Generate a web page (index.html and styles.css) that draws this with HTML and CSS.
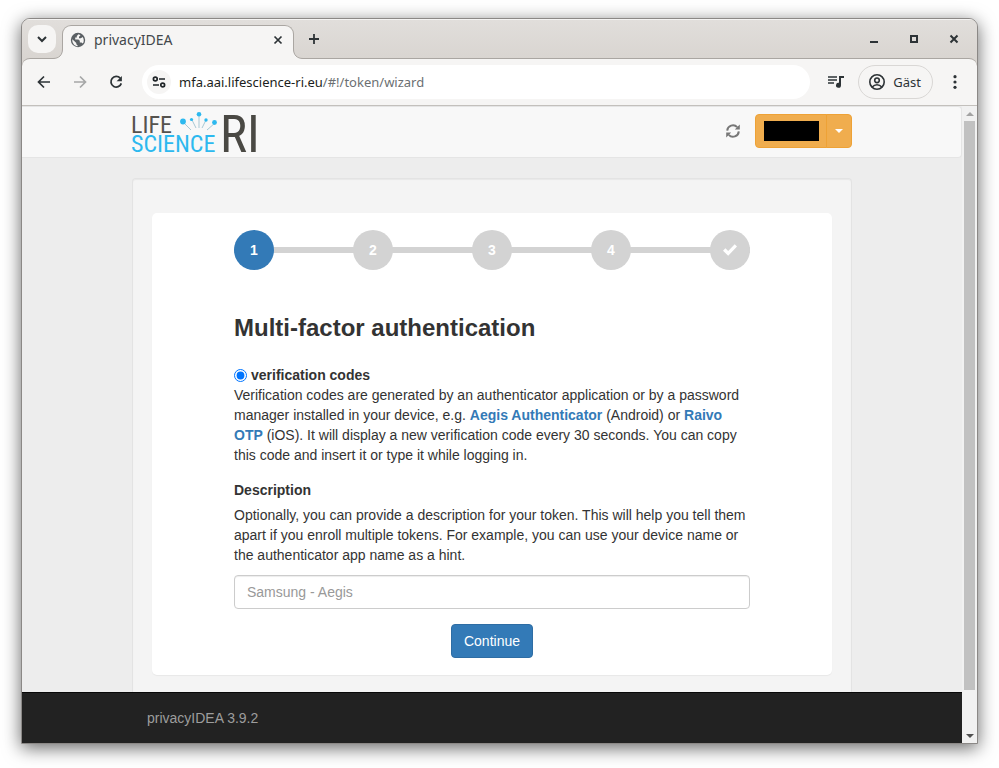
FILE: index.html
```html
<!DOCTYPE html>
<html lang="en">
<head>
<meta charset="utf-8">
<title>privacyIDEA</title>
<link rel="stylesheet" href="styles.css">
</head>
<body>
<div class="window">
  <div class="titlebar">
    <button class="tab-search" aria-label="Search tabs"><svg width="12" height="12" viewBox="0 0 12 12"><path d="M2 4l4 4 4-4" fill="none" stroke="#2d3336" stroke-width="2"/></svg></button>
    <div class="tab">
      <svg class="foot foot-left" width="10" height="10" viewBox="0 0 10 10"><path d="M10 0v10H0V9.500C6 9.500 9.500 6 9.500 0z" fill="#f6f5f4"/><path d="M0 9.500C6 9.500 9.500 6 9.500 0" fill="none" stroke="#aaa6a2"/></svg>
      <svg class="globe" width="16" height="16" viewBox="0 0 16 16"><circle cx="8" cy="8" r="7.200" fill="#5b6064"/><path d="M8.600 2.300L6.800 4v1.600H5.200v2H8.400l1.400 1.200v1.700h1.700l1.400 1C14.200 9.600 14 6.500 12.600 5L11 6.300H9V4.800l1.500-1.600zM2.300 7.300l4 3.700v1.200l1.300 1v1C4.300 14 2 11.200 2.300 7.300z" fill="#f6f5f4"/></svg>
      <span class="tab-title">privacyIDEA</span>
      <button class="plain" aria-label="Close tab"><svg width="10" height="10" viewBox="0 0 10 10"><path d="M1.500 1.500l7 7M8.500 1.500l-7 7" stroke="#2d3336" stroke-width="1.700"/></svg></button>
      <svg class="foot foot-right" width="10" height="10" viewBox="0 0 10 10"><path d="M0 0v10h10V9.500C4 9.500.5 6 .5 0z" fill="#f6f5f4"/><path d="M10 9.500C4 9.500.5 6 .5 0" fill="none" stroke="#aaa6a2"/></svg>
    </div>
    <button class="plain new-tab" aria-label="New tab"><svg width="12" height="12" viewBox="0 0 12 12"><path d="M6 1v10M1 6h10" stroke="#2d3336" stroke-width="1.800"/></svg></button>
    <div class="window-controls">
      <button class="plain" aria-label="Minimize"><svg width="10" height="10" viewBox="0 0 10 10"><path d="M1 8h8" stroke="#2d3336" stroke-width="2"/></svg></button>
      <button class="plain" aria-label="Maximize"><svg width="10" height="10" viewBox="0 0 10 10"><path d="M2 2h6v6H2z" fill="none" stroke="#2d3336" stroke-width="2"/></svg></button>
      <button class="plain" aria-label="Close"><svg width="10" height="10" viewBox="0 0 10 10"><path d="M1.500 1.500l7 7M8.500 1.500l-7 7" stroke="#2d3336" stroke-width="2"/></svg></button>
    </div>
  </div>
  <div class="toolbar">
    <button class="plain nav-button" aria-label="Back"><svg width="14" height="14" viewBox="0 0 14 14"><path d="M13 7H2M7 1.500L1.500 7 7 12.500" fill="none" stroke="#2d3336" stroke-width="1.700"/></svg></button>
    <button class="plain nav-button" aria-label="Forward"><svg width="14" height="14" viewBox="0 0 14 14"><path d="M1 7h11M7 1.500L12.500 7 7 12.500" fill="none" stroke="#a6a7a7" stroke-width="1.700"/></svg></button>
    <button class="plain nav-button" aria-label="Reload"><svg width="14" height="14" viewBox="0 0 14 14"><path d="M11.200 3.200A5.300 5.300 0 1 0 12.300 8.400" fill="none" stroke="#2d3336" stroke-width="1.800"/><path d="M12.900 1v5.300H7.600z" fill="#2d3336"/></svg></button>
    <div class="address">
      <button class="site-info" aria-label="Site information"><svg width="14" height="12" viewBox="0 0 14 12"><g fill="none" stroke="#1f2427" stroke-width="1.700"><circle cx="3.300" cy="3" r="1.900"/><path d="M7 3h6M1 9h6"/><circle cx="10.700" cy="9" r="1.900"/></g></svg></button>
      <span class="url"><span class="host">mfa.aai.lifescience-ri.eu</span>/#!/token/wizard</span>
    </div>
    <button class="plain media" aria-label="Media"><svg width="16" height="12" viewBox="0 0 16 12"><path d="M0 1h9M0 4h9M0 7h6" stroke="#2d3336" stroke-width="1.600"/><path d="M11 0h5v2h-3v7.200a2.500 2.500 0 1 1-2-2.400z" fill="#2d3336"/></svg></button>
    <button class="profile"><svg width="16" height="16" viewBox="0 0 16 16"><g fill="none" stroke="#2d3336" stroke-width="1.600"><circle cx="8" cy="8" r="7.200"/><circle cx="8" cy="6.300" r="2.300"/><path d="M3.200 13c2.600-3.100 7-3.100 9.600 0"/></g></svg>Gäst</button>
    <button class="plain menu" aria-label="Menu"><svg width="4" height="14" viewBox="0 0 4 14"><g fill="#2d3336"><circle cx="2" cy="1.700" r="1.600"/><circle cx="2" cy="7" r="1.600"/><circle cx="2" cy="12.300" r="1.600"/></g></svg></button>
  </div>
  <div class="viewport">
    <div class="page">
      <header class="navbar">
        <div class="container nav-inner">
          <a class="logo" href="#" aria-label="Life Science RI">
            <svg width="130" height="44" viewBox="0 0 130 44">
              <g class="logo-text"><text x="-1" y="23" font-size="24" fill="#55534e">LIFE</text><text x="-1" y="42" font-size="24" fill="#2db9ef">SCIENCE</text><text x="88" y="42" font-size="51" fill="#4a4944">RI</text></g>
              <g stroke="#a9c8d4" stroke-width="1"><path d="M51 12l8 8M60 10l4 8M67 5v13M74 10l-4 8M83 13l-8 7"/></g>
              <g fill="#2db9ef"><circle cx="51" cy="11.500" r="2.900"/><circle cx="59.500" cy="9.500" r="1.600"/><circle cx="67" cy="4.200" r="2.300"/><circle cx="74" cy="10" r="1.700"/><circle cx="82.500" cy="12.500" r="2.400"/></g>
            </svg>
          </a>
          <div class="actions">
            <button class="plain" aria-label="Refresh"><svg width="14" height="14" viewBox="0 0 14 14"><g fill="none" stroke="#777" stroke-width="2"><path d="M1.200 6.600A5.800 5.800 0 0 1 11.200 3.100M12.800 7.400A5.800 5.800 0 0 1 2.800 10.900"/></g><path d="M13.800.4V5.400H8.800zM.2 13.600V8.600H5.200z" fill="#777"/></svg></button>
            <div class="btn-group">
              <button class="user" aria-label="User"><span class="redacted"></span></button>
              <button class="user-menu" aria-label="User menu"><span class="caret"></span></button>
            </div>
          </div>
        </div>
      </header>
      <main class="container well">
        <form class="card">
          <ol class="steps">
            <li class="step active">1</li>
            <li class="step">2</li>
            <li class="step">3</li>
            <li class="step">4</li>
            <li class="step"><svg width="16" height="14" viewBox="0 0 16 14"><path d="M1 7.700L3.400 5.300 6.200 8 12.700 1.200 15 3.400 6.200 12.800z" fill="#fff"/></svg></li>
          </ol>
          <h1>Multi-factor authentication</h1>
          <div class="choice"><input type="radio" id="totp" name="type" checked><label for="totp">verification codes</label></div>
          <p class="intro">Verification codes are generated by an authenticator application or by a password manager installed in your device, e.g. <a href="#">Aegis Authenticator</a> (Android) or <a href="#">Raivo OTP</a> (iOS). It will display a new verification code every 30 seconds. You can copy this code and insert it or type it while logging in.</p>
          <label class="field-label" for="description">Description</label>
          <p class="help">Optionally, you can provide a description for your token. This will help you tell them apart if you enroll multiple tokens. For example, you can use your device name or the authenticator app name as a hint.</p>
          <input class="field" type="text" id="description" placeholder="Samsung - Aegis">
          <button class="primary" type="button">Continue</button>
        </form>
      </main>
      <footer class="footer"><div class="container">privacyIDEA 3.9.2</div></footer>
    </div>
    <div class="scrollbar"><span class="arrow up"></span><span class="thumb"></span><span class="arrow down"></span></div>
  </div>
</div>
</body>
</html>
```
FILE: styles.css
```css
* { box-sizing: border-box; }
body {
  margin: 0;
  padding: 18px 21px 24px;
  min-height: 100vh;
  display: flex;
  background: #fff;
  color: #333;
  font: 14px/20px "Liberation Sans", Arial, sans-serif;
}
button { font: inherit; cursor: pointer; }
svg { display: block; flex: none; }
.plain { padding: 0; border: 0; background: none; }

.window {
  flex: 1;
  display: flex;
  flex-direction: column;
  border: 1px solid #8b8886;
  border-radius: 9px 9px 0 0;
  background: #d9d5d1;
  box-shadow: 0 4px 18px rgba(0, 0, 0, .6);
  overflow: hidden;
}
.titlebar {
  display: flex;
  align-items: center;
  height: 39px;
  padding: 0 18px 0 6px;
  border-top: 1px solid #f4f3f2;
  background: linear-gradient(#e1dedb, #d9d5d1);
}
.tab-search {
  display: grid;
  place-items: center;
  width: 28px;
  height: 28px;
  padding: 0;
  border: 0;
  border-radius: 10px;
  background: #f6f5f4;
}
.tab {
  position: relative;
  z-index: 1;
  align-self: flex-end;
  display: flex;
  align-items: center;
  width: 232px;
  height: 34px;
  margin: 0 0 -1px 6px;
  padding: 0 10px 6px 7px;
  border: 1px solid #aaa6a2;
  border-bottom: 0;
  border-radius: 9px 9px 0 0;
  background: #f6f5f4;
}
.foot { position: absolute; bottom: 0; }
.foot-left { left: -10px; }
.foot-right { right: -10px; }
.tab-title {
  flex: 1;
  margin-left: 8px;
  color: #43484b;
  font: 14px/20px "Noto Sans", sans-serif;
}
.new-tab { margin-left: 14px; }
.window-controls { display: flex; gap: 30px; margin-left: auto; }

.toolbar {
  display: flex;
  align-items: center;
  height: 48px;
  padding: 0 20px 0 15px;
  border-top: 1px solid #aaa6a2;
  border-bottom: 1px solid #c3c0bc;
  border-radius: 8px 8px 0 0;
  background: #f6f5f4;
}
.nav-button { margin-right: 22px; }
.address {
  flex: 1;
  display: flex;
  align-items: center;
  gap: 8px;
  height: 34px;
  margin-left: -3px;
  padding: 0 5px;
  border-radius: 17px;
  background: #fff;
}
.site-info {
  display: grid;
  place-items: center;
  width: 24px;
  height: 24px;
  padding: 0;
  border: 0;
  border-radius: 50%;
  background: #f6f5f4;
}
.url { color: #6b6f72; font: 13px/20px "Noto Sans", sans-serif; }
.host { color: #1b1e20; }
.media { margin: 0 14px 0 18px; }
.profile {
  display: flex;
  align-items: center;
  gap: 8px;
  height: 34px;
  padding: 0 11px 0 10px;
  border: 1px solid #d9d7d5;
  border-radius: 17px;
  background: none;
  color: #2d3336;
  font: 13px/20px "Noto Sans", sans-serif;
}
.menu { margin-left: 20px; }

.viewport { flex: 1; display: flex; }
.page {
  flex: 1;
  display: flex;
  flex-direction: column;
  background: #ededed;
}
.container { width: 100%; max-width: 720px; margin: 0 auto; }
.navbar {
  border: 1px solid #e5e5e5;
  border-left: 0;
  border-radius: 0 4px 4px 0;
  background: #f8f8f8;
}
.nav-inner { display: flex; align-items: center; height: 50px; }
.actions { display: flex; align-items: center; align-self: flex-start; gap: 15px; margin: 7px 0 0 auto; }
.logo-text { font-family: "Roboto Condensed", "Liberation Sans Narrow", sans-serif; font-weight: 400; }
.btn-group { display: flex; }
.btn-group button {
  display: grid;
  place-items: center;
  height: 34px;
  padding: 0 7px 0 8px;
  border: 1px solid #eea236;
  background: #f0ad4e;
}
.btn-group .user { border-radius: 4px 0 0 4px; }
.btn-group .user-menu { width: 26px; margin-left: -1px; border-radius: 0 4px 4px 0; }
.redacted { width: 55px; height: 20px; background: #000; }
.caret { border: 4px solid transparent; border-top-color: #fff; border-bottom: 0; }

.well {
  flex: 1;
  margin-top: 20px;
  padding: 34px 19px 17px;
  border: 1px solid #e3e3e3;
  border-bottom: 0;
  border-radius: 4px 4px 0 0;
  background: #f4f4f4;
  box-shadow: inset 0 1px 1px rgba(0, 0, 0, .05);
}
.card {
  display: flex;
  flex-direction: column;
  padding: 17px 82px;
  border-radius: 5px;
  background: #fff;
  box-shadow: 0 1px 1px rgba(0, 0, 0, .05);
}
.steps {
  display: flex;
  justify-content: space-between;
  margin: 0 0 45px;
  padding: 0;
  list-style: none;
  background: linear-gradient(#d3d3d3, #d3d3d3) center / 100% 6px no-repeat;
}
.step {
  display: grid;
  place-items: center;
  width: 40px;
  height: 40px;
  border-radius: 50%;
  background: #d3d3d3;
  color: #fff;
  font-weight: bold;
}
.active { background: #337ab7; }
h1 { margin: 0 0 24px; font-size: 24px; line-height: 26px; }
.choice { display: flex; align-items: center; gap: 4px; font-weight: bold; }
.choice input { width: 13px; height: 13px; margin: 0; }
p { margin: 0; }
.intro { margin-bottom: 15px; }
a { color: #337ab7; font-weight: bold; text-decoration: none; }
.field-label { margin-bottom: 5px; font-weight: bold; }
.help { margin-bottom: 10px; }
.field {
  height: 34px;
  padding: 6px 12px;
  border: 1px solid #ccc;
  border-radius: 4px;
  background: #fff;
  box-shadow: inset 0 1px 1px rgba(0, 0, 0, .075);
  color: #555;
  font: inherit;
}
.field::placeholder { color: #999; }
.primary {
  align-self: center;
  height: 34px;
  margin-top: 15px;
  padding: 6px 12px;
  border: 1px solid #2e6da4;
  border-radius: 4px;
  background: #337ab7;
  color: #fff;
}
.footer {
  padding: 15px;
  border-top: 1px solid #080808;
  background: #222;
  color: #9d9d9d;
}
.footer .container { max-width: 690px; }

.scrollbar {
  display: flex;
  flex-direction: column;
  align-items: center;
  width: 15px;
  padding: 6px 0 5px;
  background: #f1f1f1;
}
.thumb { flex: 1; width: 11px; margin: 5px 0 44px; background: #c1c1c1; }
.arrow { border: 4px solid transparent; }
.up { border-top: 0; border-bottom: 4px solid #a3a3a3; }
.down { border-bottom: 0; border-top: 4px solid #505050; }
```
